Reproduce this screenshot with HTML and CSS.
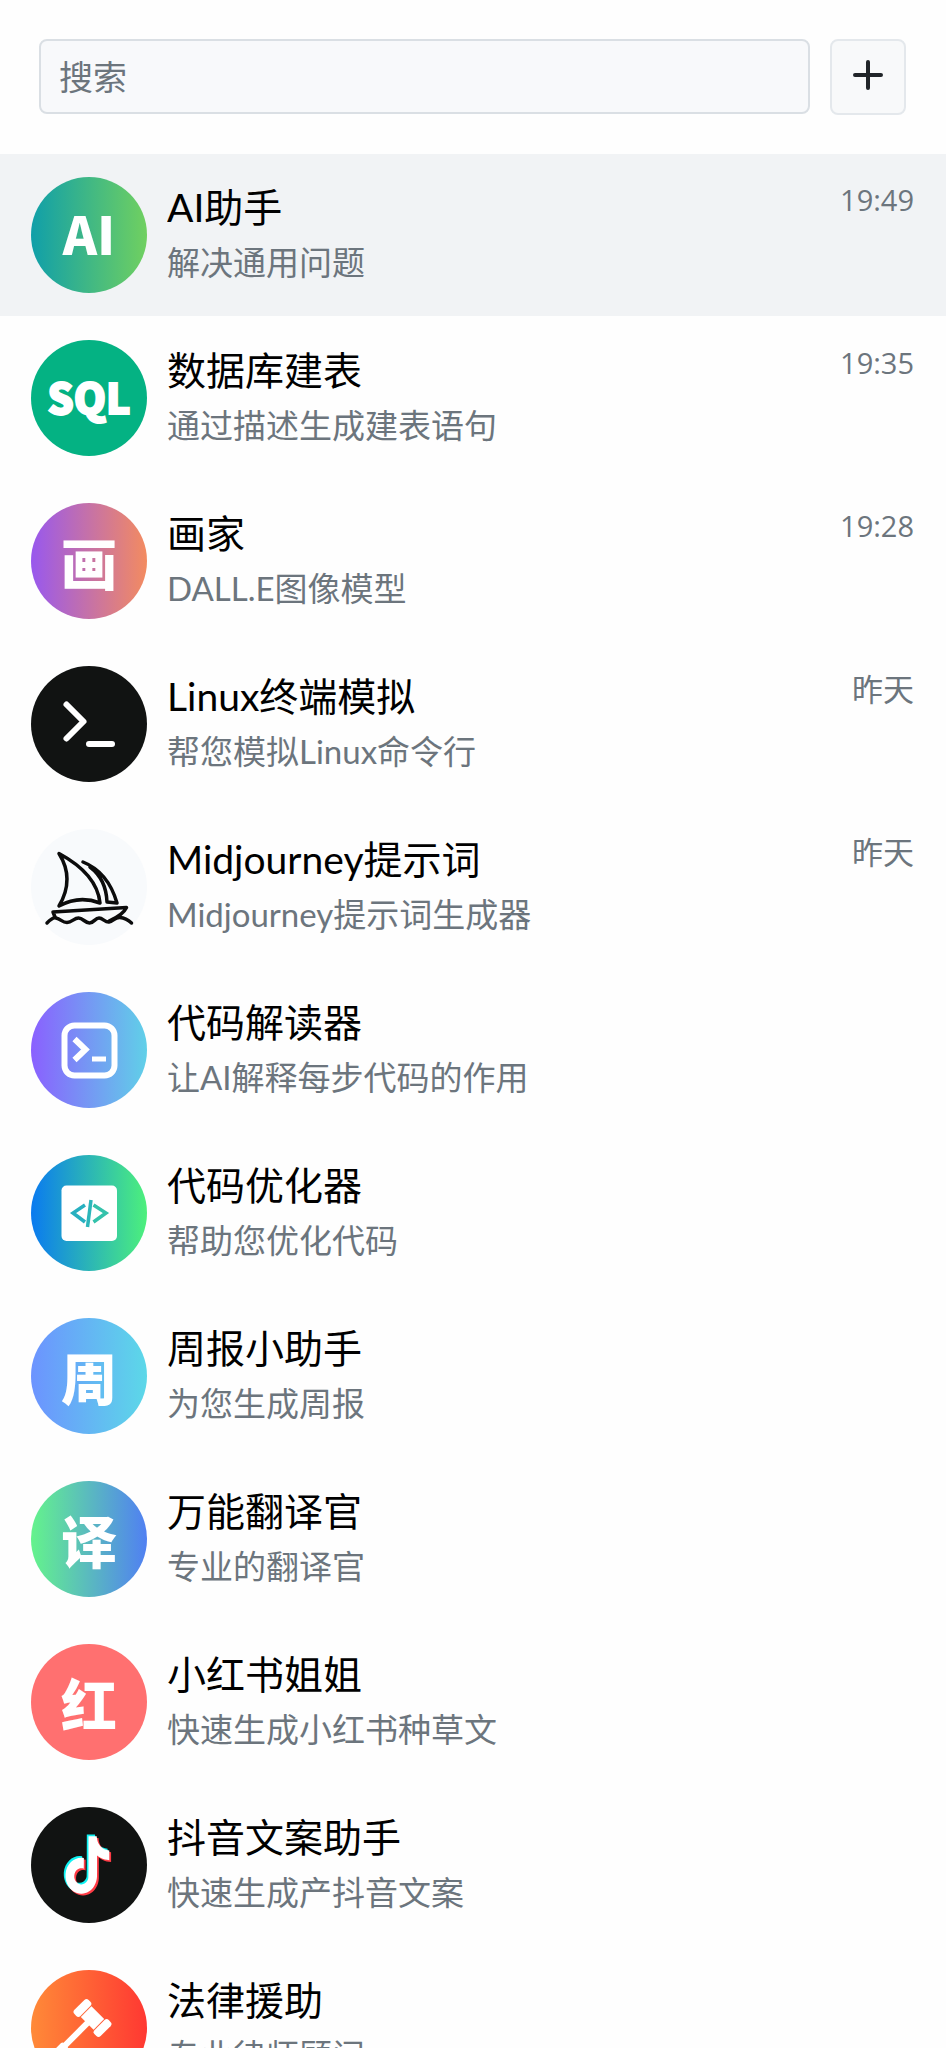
FILE: index.html
```
<!DOCTYPE html>
<html lang="zh-CN">
<head>
    <meta charset="UTF-8">
    <meta name="viewport" content="width=device-width, initial-scale=1.0">
    <title>AI助手</title>
    <link rel="stylesheet" href="styles.css">
</head>
<body>
    <div class="app">
        <header class="toolbar">
            <input class="search" type="search" placeholder="搜索" aria-label="搜索">
            <button class="add" type="button" aria-label="新建">
                <svg viewBox="0 0 36 36"><path d="M18 3v26M5 16h26"/></svg>
            </button>
        </header>

        <ul class="chats">
            <li>
                <a class="chat active" href="#">
                    <span class="avatar avatar-ai">AI</span>
                    <span class="info">
                        <span class="name">AI助手</span>
                        <span class="desc">解决通用问题</span>
                    </span>
                    <time class="time">19:49</time>
                </a>
            </li>
            <li>
                <a class="chat" href="#">
                    <span class="avatar avatar-sql">SQL</span>
                    <span class="info">
                        <span class="name">数据库建表</span>
                        <span class="desc">通过描述生成建表语句</span>
                    </span>
                    <time class="time">19:35</time>
                </a>
            </li>
            <li>
                <a class="chat" href="#">
                    <span class="avatar avatar-paint">画</span>
                    <span class="info">
                        <span class="name">画家</span>
                        <span class="desc">DALL.E图像模型</span>
                    </span>
                    <time class="time">19:28</time>
                </a>
            </li>
            <li>
                <a class="chat" href="#">
                    <span class="avatar avatar-dark">
                        <svg viewBox="0 0 116 116" fill="none" stroke="#fff" stroke-linecap="round" stroke-linejoin="round">
                            <path stroke-width="6" d="M35.5 38.500L52.500 55.500L35.500 72.500"/>
                            <path stroke-width="6" d="M58 78h23"/>
                        </svg>
                    </span>
                    <span class="info">
                        <span class="name">Linux终端模拟</span>
                        <span class="desc">帮您模拟Linux命令行</span>
                    </span>
                    <time class="time day">昨天</time>
                </a>
            </li>
            <li>
                <a class="chat" href="#">
                    <span class="avatar avatar-light">
                        <svg viewBox="0 0 116 116" fill="none" stroke="#0c0c0c" stroke-width="3.500" stroke-linecap="round" stroke-linejoin="round">
                            <path d="M28 24.500Q44 50 28 77Q48 66 69 74Q66 45 28 24.500z"/>
                            <path d="M52 33Q77 43 86 74L76 73Q75 50 59 38"/>
                            <path d="M22 83L95.500 78.500Q92 86 78 92M22 83L24 88"/>
                            <path d="M16 94Q22 88 25 89C30 90 31 93.500 36 93.500S43 89 47.500 89S54 94 58.500 94S64 89 68 89S74 93.500 78 93S84 88 89 88.500Q95 89 100.500 94"/>
                        </svg>
                    </span>
                    <span class="info">
                        <span class="name">Midjourney提示词</span>
                        <span class="desc">Midjourney提示词生成器</span>
                    </span>
                    <time class="time day">昨天</time>
                </a>
            </li>
            <li>
                <a class="chat" href="#">
                    <span class="avatar avatar-explain">
                        <svg viewBox="0 0 116 116" fill="none" stroke="#fff">
                            <rect x="33.500" y="33.500" width="50" height="50" rx="10" stroke-width="6"/>
                            <path stroke-width="6" d="M43.500 47L54.500 57.500L43.500 68"/>
                            <path stroke-width="5" d="M61 67h14"/>
                        </svg>
                    </span>
                    <span class="info">
                        <span class="name">代码解读器</span>
                        <span class="desc">让AI解释每步代码的作用</span>
                    </span>
                </a>
            </li>
            <li>
                <a class="chat" href="#">
                    <span class="avatar avatar-optimize">
                        <svg viewBox="0 0 116 116">
                            <rect x="30.500" y="30.500" width="55.500" height="55.500" rx="5" fill="#fff"/>
                            <g fill="none" stroke-width="3.500">
                                <path stroke="#28b0c0" d="M54 50L42 58L54 67"/>
                                <path stroke="#2cb6ba" d="M60 45L56.500 72"/>
                                <path stroke="#34c2ab" d="M62.500 50L75 58L62.500 67"/>
                            </g>
                        </svg>
                    </span>
                    <span class="info">
                        <span class="name">代码优化器</span>
                        <span class="desc">帮助您优化代码</span>
                    </span>
                </a>
            </li>
            <li>
                <a class="chat" href="#">
                    <span class="avatar avatar-week">周</span>
                    <span class="info">
                        <span class="name">周报小助手</span>
                        <span class="desc">为您生成周报</span>
                    </span>
                </a>
            </li>
            <li>
                <a class="chat" href="#">
                    <span class="avatar avatar-translate">译</span>
                    <span class="info">
                        <span class="name">万能翻译官</span>
                        <span class="desc">专业的翻译官</span>
                    </span>
                </a>
            </li>
            <li>
                <a class="chat" href="#">
                    <span class="avatar avatar-red">红</span>
                    <span class="info">
                        <span class="name">小红书姐姐</span>
                        <span class="desc">快速生成小红书种草文</span>
                    </span>
                </a>
            </li>
            <li>
                <a class="chat" href="#">
                    <span class="avatar avatar-dark">
                        <svg viewBox="0 0 116 116">
                            <defs>
                                <path id="note" d="M12.525.02c1.31-.02 2.61-.01 3.91-.02.08 1.53.63 3.09 1.75 4.17 1.12 1.11 2.7 1.62 4.24 1.79v4.03c-1.44-.05-2.89-.35-4.2-.97-.57-.26-1.1-.59-1.62-.93-.01 2.92.01 5.84-.02 8.75-.08 1.4-.54 2.79-1.35 3.94-1.31 1.92-3.58 3.17-5.91 3.21-1.43.08-2.86-.31-4.08-1.03-2.02-1.19-3.44-3.37-3.65-5.71-.02-.5-.03-1-.01-1.49.18-1.9 1.12-3.72 2.58-4.96 1.66-1.44 3.98-2.13 6.15-1.72.02 1.48-.04 2.96-.04 4.44-.99-.32-2.15-.23-3.02.37-.63.41-1.11 1.04-1.36 1.75-.21.51-.15 1.07-.14 1.61.24 1.64 1.82 3.02 3.5 2.87 1.12-.01 2.19-.66 2.77-1.61.19-.33.4-.67.41-1.06.1-1.79.06-3.57.07-5.36.01-4.03-.01-8.05.02-12.07z"/>
                            </defs>
                            <use href="#note" fill="#0ff2f2" transform="translate(29.500 27.500) scale(2.100 2.400)"/>
                            <use href="#note" fill="#ff3b45" transform="translate(33 31) scale(2.100 2.400)"/>
                            <use href="#note" fill="#fff" transform="translate(31.200 29.200) scale(2.100 2.400)"/>
                        </svg>
                    </span>
                    <span class="info">
                        <span class="name">抖音文案助手</span>
                        <span class="desc">快速生成产抖音文案</span>
                    </span>
                </a>
            </li>
            <li>
                <a class="chat" href="#">
                    <span class="avatar avatar-law">
                        <svg viewBox="0 0 116 116" fill="#fff">
                            <g transform="translate(61.500 48) rotate(45)">
                                <rect x="-18.500" y="-10" width="8.500" height="20" rx="3"/>
                                <rect x="-9" y="-7.500" width="18" height="15"/>
                                <rect x="10" y="-10" width="8.500" height="20" rx="3"/>
                                <rect x="-3" y="7" width="6" height="36"/>
                                <rect x="-4.500" y="38" width="9" height="18" rx="2"/>
                            </g>
                        </svg>
                    </span>
                    <span class="info">
                        <span class="name">法律援助</span>
                        <span class="desc">专业律师顾问</span>
                    </span>
                </a>
            </li>
        </ul>
    </div>
</body>
</html>
```
FILE: styles.css
```
* {
    margin: 0;
    padding: 0;
    box-sizing: border-box;
}

body {
    background: #fefefe;
    color: #000;
    font-family: Lato, "Noto Sans CJK SC", sans-serif;
}

.app {
    display: flex;
    flex-direction: column;
    height: 100vh;
}

/* search bar */
.toolbar {
    display: flex;
    gap: 20px;
    padding: 39px 40px 39px 39px;
}

.search {
    flex: 1;
    min-width: 0;
    height: 75px;
    padding: 0 18px;
    background: #f8f9fb;
    border: 2px solid #dadfe4;
    border-radius: 8px;
    font: inherit;
    font-size: 34px;
    appearance: none;
}

.search::placeholder {
    color: #6c757d;
}

.add {
    display: flex;
    align-items: center;
    justify-content: center;
    width: 76px;
    height: 76px;
    background: #f8f9fa;
    border: 2px solid #e4e8ec;
    border-radius: 8px;
    cursor: pointer;
}

.add svg {
    width: 36px;
    height: 36px;
    stroke: #212529;
    stroke-width: 4;
    stroke-linecap: round;
}

/* chat list */
.chats {
    flex: 1;
    min-height: 0;
    overflow-y: auto;
    scrollbar-width: none;
    list-style: none;
}

.chat {
    display: flex;
    align-items: center;
    gap: 20px;
    margin-bottom: 1px;
    padding: 23px 32px 23px 31px;
    color: inherit;
    text-decoration: none;
}

.active,
.chat:hover {
    background: #f1f3f5;
}

.info {
    flex: 1;
    min-width: 0;
    padding-bottom: 2px;
}

.name,
.desc {
    display: block;
    overflow: hidden;
    white-space: nowrap;
    text-overflow: ellipsis;
}

.name {
    font-size: 39px;
    line-height: 56px;
}

.desc {
    color: #6c757d;
    font-size: 33px;
    line-height: 54px;
}

.time {
    align-self: flex-start;
    color: #6c757d;
    font-family: "Open Sans", "Noto Sans CJK SC", sans-serif;
    font-size: 29px;
    line-height: 46px;
}

.day {
    font-size: 31px;
}

/* avatars */
.avatar {
    display: flex;
    align-items: center;
    justify-content: center;
    flex-shrink: 0;
    width: 116px;
    height: 116px;
    border-radius: 50%;
    color: #fff;
    font-family: "Noto Sans CJK SC", sans-serif;
    font-size: 56px;
    font-weight: 900;
    line-height: 1;
    overflow: hidden;
}

.avatar svg {
    width: 100%;
    height: 100%;
}

.avatar-ai,
.avatar-sql {
    padding-bottom: 4px;
}

.avatar-ai {
    background: linear-gradient(to right, #109fa9, #70d060);
    font-size: 52px;
}

.avatar-sql {
    background: #04b283;
    font-size: 41px;
    -webkit-text-stroke: 2px #fff;
}

.avatar-paint {
    background: linear-gradient(to right, #9858ee, #f38b60);
}

.avatar-dark {
    background: #111312;
}

.avatar-light {
    background: #f8fafc;
}

.avatar-explain {
    background: linear-gradient(to right, #8a60ff, #60d0e8);
}

.avatar-optimize {
    background: linear-gradient(to right, #0a7af0, #4df07c);
}

.avatar-week {
    background: linear-gradient(to right, #6c93ff, #5cd8e8);
}

.avatar-translate {
    background: linear-gradient(to right, #64f38c, #5080f2);
}

.avatar-red {
    background: #ff7070;
}

.avatar-law {
    background: linear-gradient(to right, #ff8a38, #ff3832);
}
```
